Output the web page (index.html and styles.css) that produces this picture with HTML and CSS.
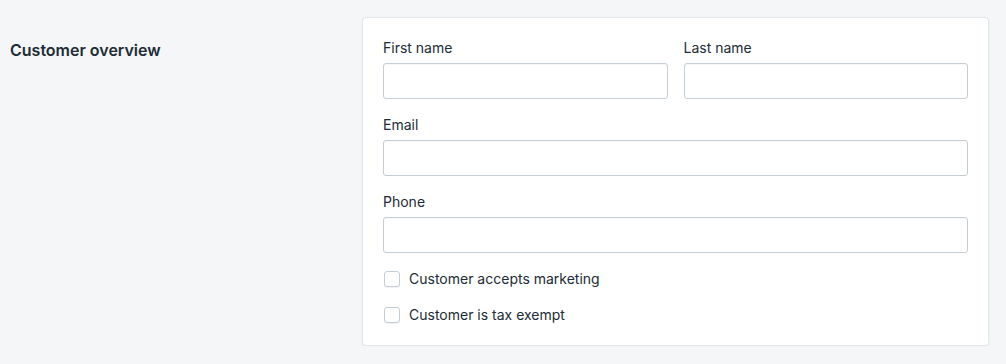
FILE: index.html
```html
<!DOCTYPE html>
<html lang="en">
<head>
<meta charset="utf-8">
<title>Customer overview</title>
<link rel="stylesheet" href="styles.css">
</head>
<body>
<div class="section">
  <div class="annotation">
    <h2 class="heading">Customer overview</h2>
  </div>
  <div class="card">
    <div class="form">
      <div class="group">
        <div class="field">
          <label class="label">First name</label>
          <input class="input" type="text">
        </div>
        <div class="field">
          <label class="label">Last name</label>
          <input class="input" type="text">
        </div>
      </div>
      <div class="field">
        <label class="label">Email</label>
        <input class="input" type="email">
      </div>
      <div class="field">
        <label class="label">Phone</label>
        <input class="input" type="tel">
      </div>
      <label class="check"><span class="box"></span><span>Customer accepts marketing</span></label>
      <label class="check"><span class="box"></span><span>Customer is tax exempt</span></label>
    </div>
  </div>
</div>
</body>
</html>
```

FILE: styles.css
```css
html, body {
  margin: 0;
  padding: 0;
  background: #f4f6f8;
  font-family: Inter, "Noto Sans", "Liberation Sans", sans-serif;
  color: #212b36;
}
.section {
  display: flex;
  padding: 17px 17px 0 10px;
}
.annotation {
  width: 352px;
  flex: none;
  padding-top: 21px;
}
.heading {
  margin: 0;
  font-size: 16px;
  line-height: 24px;
  font-weight: 600;
  color: #212b36;
}
.card {
  flex: 1;
  background: #fff;
  border: 1px solid #e3e6e9;
  border-radius: 4px;
  padding: 20px;
  box-shadow: 0 1px 2px rgba(63, 63, 68, 0.08);
}
.form {
  display: flex;
  flex-direction: column;
  gap: 16px;
}
.group {
  display: flex;
  gap: 16px;
}
.group .field {
  flex: 1;
}
.field {
  display: flex;
  flex-direction: column;
}
.label {
  font-size: 14px;
  line-height: 20px;
  margin-bottom: 5px;
}
.input {
  box-sizing: border-box;
  height: 36px;
  margin: 0;
  border: 1px solid #c4cdd5;
  border-radius: 3px;
  background: #fff;
  box-shadow: inset 0 1px 0 rgba(99, 115, 129, 0.05);
}
.check {
  display: flex;
  align-items: center;
  gap: 9px;
  font-size: 14px;
  line-height: 20px;
  padding-left: 1px;
}
.box {
  box-sizing: border-box;
  width: 16px;
  height: 16px;
  border: 1px solid #c4cdd5;
  border-radius: 3px;
  background: #fff;
  box-shadow: 0 1px 0 rgba(22, 29, 37, 0.05);
}
```
